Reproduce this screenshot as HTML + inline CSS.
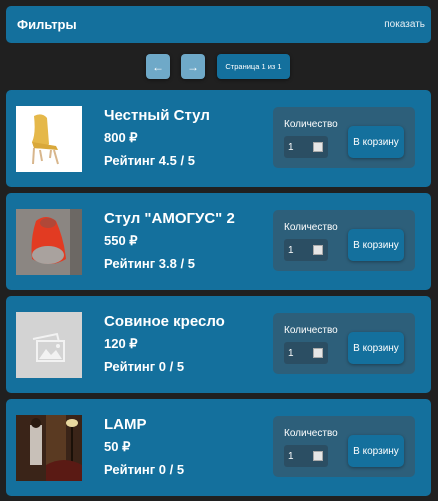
<!DOCTYPE html>
<html><head><meta charset="utf-8"><style>
*{box-sizing:border-box;margin:0;padding:0}
body{width:438px;height:501px;background:#202020;font-family:"Liberation Sans",Arial,sans-serif;color:#fff;position:relative;overflow:hidden}
.filt{position:absolute;left:6px;top:6px;width:425px;height:37px;background:#14709d;border-radius:5px}
.filt b{position:absolute;left:11px;top:11px;font-size:13px}
.filt span{position:absolute;right:6px;top:13px;font-size:10px;color:#e8f0f5}
.pb{position:absolute;top:54px;height:25px;border-radius:4px;font-size:12px;display:flex;align-items:center;justify-content:center;box-shadow:0 1px 3px rgba(0,0,0,.5)}
.card{position:absolute;left:6px;width:425px;height:97px;background:#14709d;border-radius:5px}
.img{position:absolute;left:10px;top:16px;width:66px;height:66px;overflow:hidden}
.t{position:absolute;left:98px;top:17px;font-size:15px;font-weight:bold}
.p{position:absolute;left:98px;top:40px;font-size:13px;font-weight:bold}
.r{position:absolute;left:98px;top:63px;font-size:13px;font-weight:bold}
.panel{position:absolute;left:267px;top:17px;width:142px;height:61px;background:#2d5f7a;border-radius:5px}
.panel .l{position:absolute;left:11px;top:12px;font-size:10px}
.inp{position:absolute;left:11px;top:29px;width:44px;height:22px;background:#2b4e63;border-radius:3px;font-size:10px;padding:6px 0 0 4px}
.inp i{position:absolute;right:5px;top:6px;width:10px;height:10px;background:#e6e6e6;border:1px solid #aaa}
.btn{position:absolute;left:75px;top:19px;width:56px;height:32px;background:#14709d;border-radius:5px;font-size:10px;display:flex;align-items:center;justify-content:center;box-shadow:0 1px 3px rgba(0,0,0,.35)}
</style></head><body>
<div class="filt"><b>Фильтры</b><span>показать</span></div>
<div class="pb" style="left:146px;width:24px;background:#6fa9c8">←</div>
<div class="pb" style="left:181px;width:24px;background:#6fa9c8">→</div>
<div class="pb" style="left:217px;width:73px;background:#14709d;font-size:7.5px">Страница 1 из 1</div>

<div class="card" style="top:90px">
<div class="img" style="background:#fff"><svg width="66" height="66"><path d="M18 10 Q26 6 31 12 L33 38 Q30 44 18 42 L16 36 Q20 28 18 10Z" fill="#e5b84a"/><path d="M16 36 L40 40 L42 44 L18 42Z" fill="#d9a83a"/><path d="M18 42 L17 58 M38 44 L42 58 M24 44 L26 55 M35 44 L34 52" stroke="#d8b68c" stroke-width="2"/></svg></div>
<div class="t">Честный Стул</div><div class="p">800 ₽</div><div class="r">Рейтинг 4.5 / 5</div>
<div class="panel"><div class="l">Количество</div><div class="inp">1<i></i></div><div class="btn">В корзину</div></div></div>

<div class="card" style="top:193px">
<div class="img" style="background:#8b8682"><div style="position:absolute;right:0;top:0;width:12px;height:66px;background:#6c6864"></div><svg width="66" height="66" style="position:absolute;left:0;top:0"><path d="M20 12 Q30 4 40 12 Q48 30 50 50 Q34 60 16 50 Q14 30 20 12Z" fill="#e23b22"/><ellipse cx="32" cy="46" rx="16" ry="9" fill="#a9a29e"/><ellipse cx="32" cy="14" rx="8" ry="5" fill="#b04838"/></svg></div>
<div class="t">Стул "АМОГУС" 2</div><div class="p">550 ₽</div><div class="r">Рейтинг 3.8 / 5</div>
<div class="panel"><div class="l">Количество</div><div class="inp">1<i></i></div><div class="btn">В корзину</div></div></div>

<div class="card" style="top:296px">
<div class="img" style="background:#d3d3d3"><svg width="66" height="66"><g fill="none" stroke="#f2f2f2" stroke-width="2"><path d="M17 27 L41 22 L43 30"/><rect x="21" y="29" width="27" height="20"/></g><path d="M23 47 L30 37 L35 43 L40 38 L46 47Z" fill="#f2f2f2"/><circle cx="42" cy="34" r="2" fill="#f2f2f2"/></svg></div>
<div class="t">Совиное кресло</div><div class="p">120 ₽</div><div class="r">Рейтинг 0 / 5</div>
<div class="panel"><div class="l">Количество</div><div class="inp">1<i></i></div><div class="btn">В корзину</div></div></div>

<div class="card" style="top:399px">
<div class="img" style="background:#2a1a14"><svg width="66" height="66"><rect x="0" y="0" width="66" height="66" fill="#3a2418"/><rect x="30" y="0" width="20" height="50" fill="#5a3a22"/><rect x="14" y="10" width="12" height="40" fill="#c8c0b8"/><circle cx="20" cy="8" r="5" fill="#2a1a10"/><ellipse cx="56" cy="8" rx="6" ry="4" fill="#e8d8a0"/><rect x="55" y="12" width="2" height="40" fill="#1a1008"/><path d="M30 50 Q48 40 66 50 L66 66 L30 66Z" fill="#5a1a14"/></svg></div>
<div class="t">LAMP</div><div class="p">50 ₽</div><div class="r">Рейтинг 0 / 5</div>
<div class="panel"><div class="l">Количество</div><div class="inp">1<i></i></div><div class="btn">В корзину</div></div></div>
</body></html>
